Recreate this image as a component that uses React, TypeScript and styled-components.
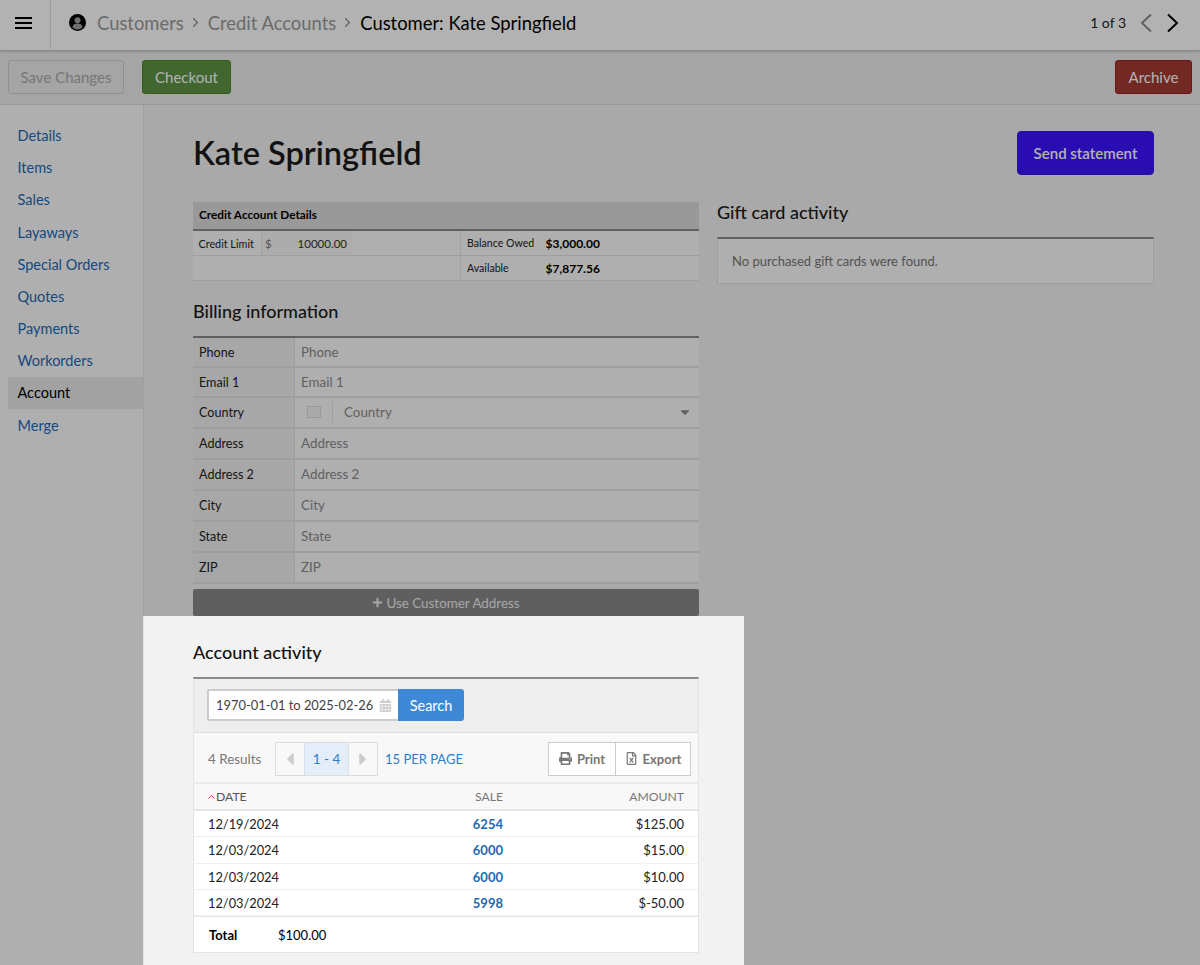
import React from 'react';
import styled, { createGlobalStyle } from 'styled-components';
import { ChevronRight } from 'lucide-react';
import {
	FaCalendarAlt,
	FaCaretDown,
	FaCaretLeft,
	FaCaretRight,
	FaPlus,
	FaPrint,
	FaRegFileExcel,
} from 'react-icons/fa';

const navItems = [
	'Details',
	'Items',
	'Sales',
	'Layaways',
	'Special Orders',
	'Quotes',
	'Payments',
	'Workorders',
	'Account',
	'Merge',
];

const billingFields = ['Phone', 'Email 1', 'Country', 'Address', 'Address 2', 'City', 'State', 'ZIP'];

const activity = [
	{ date: '12/19/2024', sale: '6254', amount: '$125.00' },
	{ date: '12/03/2024', sale: '6000', amount: '$15.00' },
	{ date: '12/03/2024', sale: '6000', amount: '$10.00' },
	{ date: '12/03/2024', sale: '5998', amount: '$-50.00' },
];

const App = () => {
	return (
		<>
			<GlobalStyle />
			<Page>
				<TopBar>
					<MenuCell>
						<svg width="17" height="12" viewBox="0 0 17 12">
							<path d="M0 1h17M0 6h17M0 11h17" stroke="#000" strokeWidth="2" />
						</svg>
					</MenuCell>
					<Crumbs>
						<svg width="17" height="17" viewBox="0 0 17 17">
							<circle cx="8.5" cy="8.5" r="8.5" fill="#000" />
							<circle cx="8.5" cy="6.3" r="3" fill="#a0a0a0" />
							<path d="M3.4 13.2c.4-2.6 2.4-3.6 5.1-3.6s4.700 1 5.100 3.600a7 7 0 0 1-10.200 0z" fill="#a0a0a0" />
						</svg>
						<Crumb>Customers</Crumb>
						<CrumbArrow>
							<ChevronRight size={15} strokeWidth={2.5} />
						</CrumbArrow>
						<Crumb>Credit Accounts</Crumb>
						<CrumbArrow>
							<ChevronRight size={15} strokeWidth={2.5} />
						</CrumbArrow>
						<Crumb $current>Customer: Kate Springfield</Crumb>
					</Crumbs>
					<Pager>
						<span>1 of 3</span>
						<svg width="12" height="20" viewBox="0 0 12 20">
							<path d="M11 1.500L2 10l9 8.500" fill="none" stroke="#8c8c8c" strokeWidth="2" />
						</svg>
						<svg width="12" height="20" viewBox="0 0 12 20">
							<path d="M1 1.500L10 10l-9 8.500" fill="none" stroke="#000" strokeWidth="2" />
						</svg>
					</Pager>
				</TopBar>

				<ActionBar>
					<ActionButton $variant="disabled">Save Changes</ActionButton>
					<ActionButton $variant="green">Checkout</ActionButton>
					<ActionButton $variant="red">Archive</ActionButton>
				</ActionBar>

				<Body>
					<SideNav>
						{navItems.map((item) => (
							<NavItem key={item} $active={item === 'Account'}>
								{item}
							</NavItem>
						))}
					</SideNav>

					<Main>
						<TitleRow>
							<Title>Kate Springfield</Title>
							<SendButton>Send statement</SendButton>
						</TitleRow>

						<Columns>
							<div>
								<CreditHeader>Credit Account Details</CreditHeader>
								<CreditRow>
									<CreditCell>
										<CreditLabel>Credit Limit</CreditLabel>
										<CreditInput>
											<span>$</span>
											<span>10000.00</span>
										</CreditInput>
									</CreditCell>
									<CreditStat>
										<StatLabel>Balance Owed</StatLabel>
										<StatValue>$3,000.00</StatValue>
									</CreditStat>
								</CreditRow>
								<CreditRow>
									<CreditCell />
									<CreditStat>
										<StatLabel>Available</StatLabel>
										<StatValue>$7,877.56</StatValue>
									</CreditStat>
								</CreditRow>

								<BillingTitle>Billing information</BillingTitle>
								<FormTable>
									{billingFields.map((field, i) => (
										<FormRow key={field} $tall={i > 1}>
											<FormLabel>{field}</FormLabel>
											{field === 'Country' ? (
												<FormValue>
													<FlagBox />
													<FlagDivider />
													<span>Country</span>
													<SelectCaret>
														<FaCaretDown size={14} />
													</SelectCaret>
												</FormValue>
											) : (
												<FormValue>{field}</FormValue>
											)}
										</FormRow>
									))}
								</FormTable>
								<AddressButton>
									<FaPlus size={11} />
									Use Customer Address
								</AddressButton>

								<SectionTitle>Account activity</SectionTitle>
								<ActivityBox>
									<SearchBar>
										<DateInput>
											<span>1970-01-01 to 2025-02-26</span>
											<FaCalendarAlt size={13} color="#cfcfcf" />
										</DateInput>
										<SearchButton>Search</SearchButton>
									</SearchBar>
									<ResultsBar>
										<ResultCount>4 Results</ResultCount>
										<PageGroup>
											<PageArrow>
												<FaCaretLeft size={20} />
											</PageArrow>
											<PageCurrent>1 - 4</PageCurrent>
											<PageArrow>
												<FaCaretRight size={20} />
											</PageArrow>
										</PageGroup>
										<PerPage>15 PER PAGE</PerPage>
										<ExportGroup>
											<ExportButton $width={66}>
												<FaPrint size={13} />
												Print
											</ExportButton>
											<ExportButton $width={75}>
												<FaRegFileExcel size={13} />
												Export
											</ExportButton>
										</ExportGroup>
									</ResultsBar>
									<ActivityHead>
										<DateHead>
											<svg width="7" height="4" viewBox="0 0 7 4">
												<path d="M.5 3.500l3-3 3 3" fill="none" stroke="#e8404a" />
											</svg>
											DATE
										</DateHead>
										<SaleCell>SALE</SaleCell>
										<AmountHead>AMOUNT</AmountHead>
									</ActivityHead>
									{activity.map((row, i) => (
										<ActivityRow key={i}>
											<DateCell>{row.date}</DateCell>
											<SaleLink>{row.sale}</SaleLink>
											<AmountCell>{row.amount}</AmountCell>
										</ActivityRow>
									))}
									<TotalRow>
										<strong>Total</strong>
										<span>$100.00</span>
									</TotalRow>
								</ActivityBox>
							</div>

							<div>
								<GiftTitle>Gift card activity</GiftTitle>
								<GiftBox>No purchased gift cards were found.</GiftBox>
							</div>
						</Columns>
					</Main>
				</Body>
				<Spotlight />
			</Page>
		</>
	);
};

const GlobalStyle = createGlobalStyle`
	html,
	body {
		margin: 0;
		height: 100%;
		overflow: hidden;
		font-family: Lato, 'Liberation Sans', sans-serif;
		color: #000;
	}
	* {
		box-sizing: border-box;
	}
`;

const Page = styled.div`
	position: relative;
	height: 965px;
	overflow: hidden;
	display: flex;
	flex-direction: column;
	background: #f2f2f2;
`;

const Spotlight = styled.div`
	position: absolute;
	z-index: 2;
	left: 143px;
	top: 616px;
	width: 601px;
	height: 349px;
	box-shadow: 0 0 0 2000px rgba(0, 0, 0, 0.3);
	pointer-events: none;
`;

const TopBar = styled.header`
	display: flex;
	align-items: center;
	height: 50px;
	flex-shrink: 0;
	background: #fff;
	box-shadow: 0 1px 3px rgba(0, 0, 0, 0.25);
	position: relative;
	z-index: 1;
`;

const MenuCell = styled.div`
	width: 51px;
	height: 100%;
	display: flex;
	align-items: center;
	justify-content: center;
	padding: 0 4px 5px 0;
	border-right: 1px solid #e4e4e4;
`;

const Crumbs = styled.nav`
	display: flex;
	align-items: center;
	padding: 0 0 5px 18px;
	font-size: 18.4px;
	flex: 1;
`;

const Crumb = styled.span<{ $current?: boolean }>`
	color: ${({ $current }) => ($current ? '#000' : '#999')};
	&:first-of-type {
		margin-left: 11px;
	}
`;

const CrumbArrow = styled.span`
	display: flex;
	color: #999;
	margin: 0 5px 0 4px;
`;

const Pager = styled.div`
	display: flex;
	align-items: center;
	gap: 15px;
	padding: 0 21px 5px 0;
	font-size: 14px;
	color: #222;

	span {
		margin-right: -1px;
	}
`;

const ActionBar = styled.div`
	display: flex;
	align-items: center;
	gap: 18px;
	height: 55px;
	flex-shrink: 0;
	padding: 0 8px 1px;
	background: #ececec;
	border-bottom: 1px solid #dcdcdc;

	button:last-child {
		margin-left: auto;
	}
`;

const actionColors = {
	disabled: { bg: 'transparent', border: '#cfcfcf', color: '#aaa', width: '116px' },
	green: { bg: '#5f9245', border: '#4c8a2c', color: '#fff', width: '89px' },
	red: { bg: '#a43c33', border: '#a02020', color: '#fff', width: '77px' },
};

const ActionButton = styled.button<{ $variant: keyof typeof actionColors }>`
	width: ${({ $variant }) => actionColors[$variant].width};
	height: 34px;
	padding: 0;
	font: 15px Lato, sans-serif;
	border-radius: 3px;
	background: ${({ $variant }) => actionColors[$variant].bg};
	border: 1px solid ${({ $variant }) => actionColors[$variant].border};
	color: ${({ $variant }) => actionColors[$variant].color};
`;

const Body = styled.div`
	display: flex;
	flex: 1;
	min-height: 0;
`;

const SideNav = styled.aside`
	width: 144px;
	flex-shrink: 0;
	padding: 14.6px 0 0 8px;
	background: #fbfbfb;
	border-right: 1px solid #e4e4e4;
`;

const NavItem = styled.div<{ $active?: boolean }>`
	height: 32.17px;
	display: flex;
	align-items: center;
	padding-left: 9.5px;
	font-size: 14.5px;
	color: ${({ $active }) => ($active ? '#000' : '#1c69b5')};
	background: ${({ $active }) => ($active ? '#e8e8e8' : 'transparent')};
`;

const Main = styled.main`
	flex: 1;
	min-width: 0;
	padding: 0 46px 0 49px;
`;

const TitleRow = styled.div`
	display: flex;
	align-items: center;
	justify-content: space-between;
	height: 97px;
	padding-bottom: 1px;
`;

const Title = styled.h1`
	margin: -2px 0 0;
	font-size: 32.5px;
	font-weight: 600;
	color: #1a1a1a;
`;

const SendButton = styled.button`
	width: 137px;
	height: 44px;
	padding: 0;
	border: 1px solid #3a1ae0;
	border-radius: 4px;
	background: #3d13ff;
	color: #fff;
	font: 600 15px Lato, sans-serif;
`;

const Columns = styled.div`
	display: grid;
	grid-template-columns: 506px 437px;
	column-gap: 18px;
`;

const CreditHeader = styled.div`
	height: 29px;
	display: flex;
	align-items: center;
	padding: 0 0 2px 6px;
	font-size: 11.8px;
	font-weight: 700;
	background: #dcdcdc;
	border-bottom: 2px solid #8a8a8a;
`;

const CreditRow = styled.div`
	display: grid;
	grid-template-columns: 268px 1fr;
	height: 25px;
	background: #fbfbfb;
	border-bottom: 1px solid #e2e2e2;
	font-size: 10.8px;
`;

const CreditCell = styled.div`
	display: flex;
	align-items: stretch;
	border-right: 1px solid #e8e8e8;
`;

const CreditLabel = styled.div`
	display: flex;
	align-items: center;
	width: 68px;
	padding-left: 5.5px;
	color: #222;
	white-space: nowrap;
`;

const CreditInput = styled.div`
	width: 92px;
	display: flex;
	align-items: center;
	justify-content: space-between;
	padding: 0 6px 0 3px;
	background: #f6f6f6;
	border-left: 1px solid #e8e8e8;
	font-size: 11.5px;
	color: #333;

	span:first-child {
		color: #777;
	}
`;

const CreditStat = styled.div`
	display: flex;
	align-items: center;
	padding-left: 6px;
`;

const StatLabel = styled.span`
	width: 78.5px;
	font-size: 10.6px;
	color: #222;
	white-space: nowrap;
`;

const StatValue = styled.span`
	font-size: 12px;
	font-weight: 700;
`;

const BillingTitle = styled.h2`
	margin: 0;
	height: 55px;
	padding-top: 19px;
	font-size: 18px;
	line-height: 23px;
	font-weight: 500;
	color: #1a1a1a;
`;

const FormTable = styled.section`
	border-top: 2px solid #8a8a8a;
`;

const FormRow = styled.div<{ $tall?: boolean }>`
	display: grid;
	grid-template-columns: 101px 1fr;
	height: ${({ $tall }) => ($tall ? '31px' : '30px')};
	border-bottom: 2px solid #e2e2e2;
`;

const FormLabel = styled.div`
	display: flex;
	align-items: center;
	padding-left: 6px;
	font-size: 12.6px;
	color: #222;
	background: #f0f0f0;
`;

const FormValue = styled.div`
	position: relative;
	display: flex;
	align-items: center;
	padding: 0 0 1px 6px;
	font-size: 13.4px;
	color: #8a8a8a;
	background: #fbfbfb;
	border-left: 1px solid #e2e2e2;
`;

const FlagBox = styled.span`
	width: 14px;
	height: 12px;
	margin-left: 6px;
	border: 1px solid #dcdcdc;
	background: #f4f4f4;
`;

const FlagDivider = styled.span`
	width: 1px;
	height: 22px;
	margin: 0 11px 0 11px;
	background: #e2e2e2;
`;

const SelectCaret = styled.span`
	display: flex;
	margin-left: auto;
	padding-right: 7px;
	color: #8a8a8a;
`;

const AddressButton = styled.button`
	display: flex;
	align-items: center;
	justify-content: center;
	gap: 3px;
	width: 100%;
	height: 27px;
	margin-top: 5px;
	border: 0;
	border-radius: 2px;
	background: #888;
	color: #eee;
	font: 13.4px Lato, sans-serif;
`;

const SectionTitle = styled.h2`
	margin: 0;
	height: 61px;
	padding-top: 24px;
	font-size: 18px;
	line-height: 24px;
	font-weight: 500;
	color: #111;
`;

const ActivityBox = styled.section`
	border-top: 2px solid #8a8a8a;
	border-left: 1px solid #e4e4e4;
	border-right: 1px solid #e4e4e4;
	border-bottom: 1px solid #e4e4e4;
	font-size: 14px;
	background: #fff;
`;

const SearchBar = styled.div`
	display: flex;
	align-items: center;
	height: 54px;
	padding: 0 0 1px 13px;
	background: #eee;
	border-bottom: 1px solid #ddd;
`;

const DateInput = styled.div`
	display: flex;
	align-items: center;
	justify-content: space-between;
	width: 191px;
	height: 32px;
	padding: 0 6px 0 7px;
	background: #fff;
	border: 2px solid #ccc;
	border-right: 0;
	border-radius: 2px 0 0 2px;
	font-size: 12.9px;
	color: #444;
	white-space: nowrap;
`;

const SearchButton = styled.button`
	width: 66px;
	height: 32px;
	padding: 0;
	border: 0;
	border-radius: 0 3px 3px 0;
	background: #3e89d6;
	color: #fff;
	font: 14.5px Lato, sans-serif;
`;

const ResultsBar = styled.div`
	display: flex;
	align-items: center;
	height: 51px;
	padding: 2px 7px 0 14px;
	background: #f8f8f8;
	border-bottom: 2px solid #ececec;
`;

const ResultCount = styled.span`
	width: 67px;
	font-size: 13.4px;
	color: #777;
`;

const PageGroup = styled.div`
	display: flex;
	height: 34px;
	background: #fff;
	border: 1px solid #dcdcdc;
`;

const PageArrow = styled.div`
	width: 28px;
	display: flex;
	align-items: center;
	justify-content: center;
	color: #ccc;
	background: #f8f8f8;
`;

const PageCurrent = styled.div`
	width: 45px;
	display: flex;
	align-items: center;
	justify-content: center;
	font-size: 13.4px;
	color: #2b7dcb;
	background: #e4eef9;
	border-left: 1px solid #d5e0ec;
	border-right: 1px solid #d5e0ec;
`;

const PerPage = styled.span`
	margin-left: 7px;
	font-size: 13px;
	color: #2b7dcb;
`;

const ExportGroup = styled.div`
	display: flex;
	margin-left: auto;
	height: 34px;
	background: #fff;
	border: 1px solid #ccc;
`;

const ExportButton = styled.button<{ $width: number }>`
	display: flex;
	align-items: center;
	justify-content: center;
	gap: 5px;
	width: ${({ $width }) => $width}px;
	padding: 0;
	border: 0;
	background: transparent;
	color: #777;
	font: 700 13px Lato, sans-serif;

	& + & {
		border-left: 1px solid #ccc;
	}
`;

const activityGrid = `
	display: grid;
	grid-template-columns: 1fr 100px 181px;
	align-items: center;
	padding: 0 14px;
`;

const ActivityHead = styled.div`
	${activityGrid}
	height: 27px;
	background: #f8f8f8;
	border-bottom: 2px solid #e6e6e6;
	font-size: 12.2px;
	color: #777;
`;

const DateHead = styled.span`
	display: flex;
	align-items: center;
	gap: 1px;
	color: #555;
`;

const SaleCell = styled.span`
	text-align: right;
`;

const AmountHead = styled.span`
	text-align: right;
`;

const DateCell = styled.span`
	font-size: 12.8px;
`;

const AmountCell = styled.span`
	text-align: right;
	font-size: 13px;
`;

const ActivityRow = styled.div`
	${activityGrid}
	height: 26.3px;
	padding-top: 1px;
	border-bottom: 1px solid #f0f0f0;
	color: #222;
`;

const SaleLink = styled.a`
	text-align: right;
	font-size: 13px;
	font-weight: 700;
	color: #1c69b5;
`;

const TotalRow = styled.div`
	display: flex;
	align-items: center;
	height: 36px;
	padding-left: 15px;
	border-top: 1px solid #e6e6e6;
	font-size: 13px;

	strong {
		width: 69px;
	}
`;

const GiftTitle = styled.h2`
	margin: 0;
	height: 35px;
	font-size: 18px;
	line-height: 21px;
	font-weight: 500;
	color: #1a1a1a;
`;

const GiftBox = styled.div`
	height: 47px;
	display: flex;
	align-items: center;
	padding-left: 14px;
	background: #fbfbfb;
	border: 1px solid #e2e2e2;
	border-top: 2px solid #8a8a8a;
	font-size: 13px;
	color: #777;
`;

export default App;
